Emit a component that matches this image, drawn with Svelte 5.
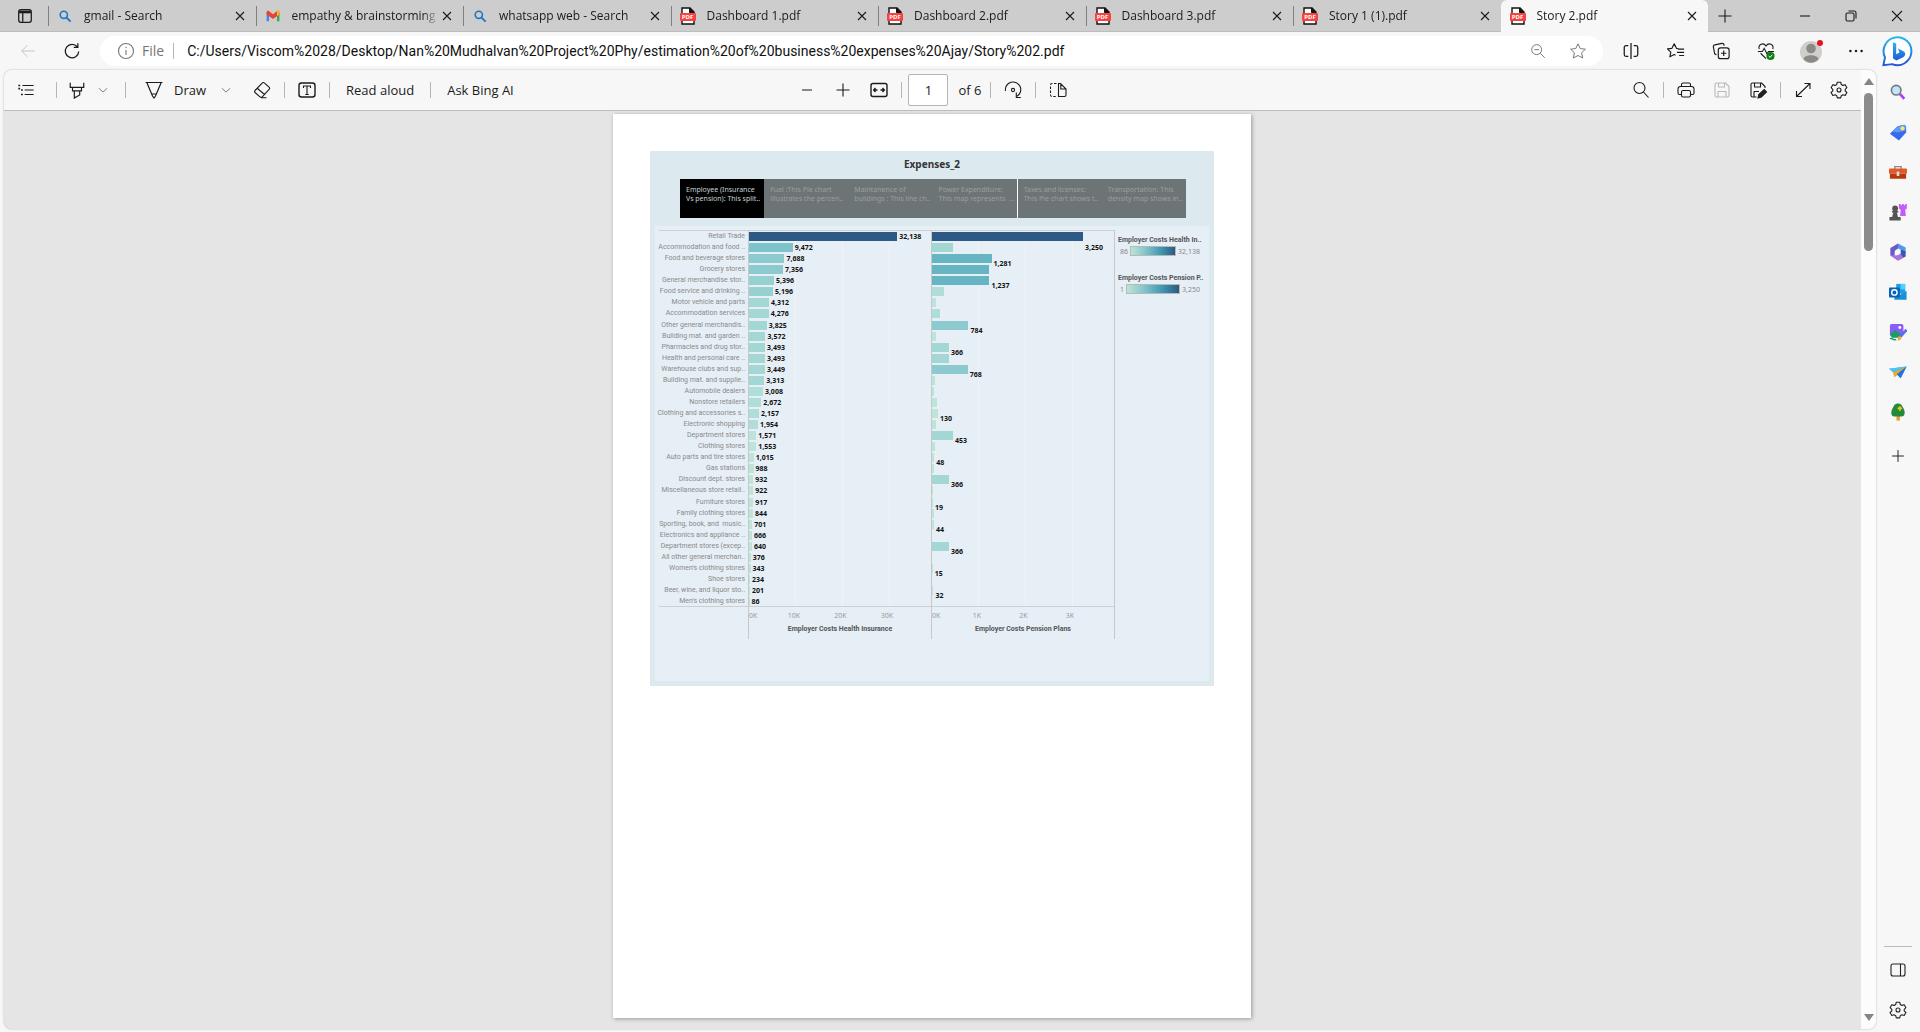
<script>
  const tabs = [
    { icon: 'find', title: 'gmail - Search' },
    { icon: 'gmail', title: 'empathy & brainstorming n' },
    { icon: 'find', title: 'whatsapp web - Search' },
    { icon: 'pdf', title: 'Dashboard 1.pdf' },
    { icon: 'pdf', title: 'Dashboard 2.pdf' },
    { icon: 'pdf', title: 'Dashboard 3.pdf' },
    { icon: 'pdf', title: 'Story 1 (1).pdf' },
    { icon: 'pdf', title: 'Story 2.pdf', active: true }
  ];

  const gear = '<path d="M8.3 2.2h3.4l.6 2.3 1.6.9 2.3-.7 1.7 3-1.7 1.6v1.6l1.7 1.6-1.7 3-2.3-.7-1.6.9-.6 2.2H8.3l-.6-2.2-1.600-.9-2.300.7-1.700-3 1.700-1.600V9.300L2.100 7.700l1.700-3 2.300.7 1.600-.9z" stroke-linejoin="round"/><circle cx="10" cy="10" r="2"/>';
  const icons = {
    tabmenu: '<rect x="3" y="3" width="14" height="14" rx="2.500" stroke-width="1.400"/><path d="M3.500 5.500h13" stroke-width="3"/><path d="M7.500 6v10.500" stroke-width="1.400"/>',
    close: '<path d="M5 5l10 10M15 5L5 15" stroke-width="1.400"/>',
    winclose: '<path d="M5 5l10 10M15 5L5 15"/>',
    plus: '<path d="M10 3.500v13M3.500 10h13"/>',
    minus: '<path d="M5 10h10"/>',
    restore: '<rect x="5" y="7" width="8" height="8" rx="1.500"/><path d="M7.500 5h5.500a2 2 0 0 1 2 2v5.500"/>',
    find: '<circle cx="8.500" cy="8.500" r="4.500" stroke="#2074c6" stroke-width="2"/><path d="M12 12l5 5" stroke="#2074c6" stroke-width="2.400"/>',
    gmail: '<path d="M2 16.500V5.500l3 2v9z" fill="#4285f4" stroke="none"/><path d="M15 7.500l3-2v11h-3z" fill="#34a853" stroke="none"/><path d="M2 5.500C2 3.500 4 3 5.200 4L10 7.700 14.800 4C16 3 18 3.500 18 5.500V8l-8 5.800L2 8z" fill="#ea4335" stroke="none"/><path d="M15 4c1.300-1 3-.3 3 1.500V8l-3 2.200z" fill="#fbbc04" stroke="none"/>',
    back: '<path d="M17.500 10H3M9.500 3.500L3 10l6.500 6.500"/>',
    refresh: '<path d="M17.500 10.500A7.500 7.500 0 1 1 16 5.500M16.500 1.500v4.500H12" stroke-width="1.400"/>',
    info: '<circle cx="10" cy="10" r="7.500"/><path d="M10 9v5M10 5.800v1.400"/>',
    zoomout: '<circle cx="8.500" cy="8.500" r="5.500"/><path d="M12.500 12.500l5 5M6 8.500h5"/>',
    star: '<path d="M10 2l2.500 5.300 5.700.7-4.200 4 1.200 5.800L10 15l-5.200 2.800L6 12 1.800 8l5.700-.7z" stroke-linejoin="round"/>',
    split: '<path d="M10 1v18" stroke-width="1.400"/><path d="M7 4H4.500a2 2 0 0 0-2 2v8a2 2 0 0 0 2 2H7M13 4h2.500a2 2 0 0 1 2 2v8a2 2 0 0 1-2 2H13" stroke-width="1.400"/>',
    favs: '<path d="M12.500 7.200l-2-.2L8 2 5.500 7l-5 .7 3.700 3.500-1 5.300L8 14l1.500.8M12 8h7M11 11.500h8M13.500 15h5.500" stroke-linejoin="round" stroke-width="1.300"/>',
    collections: '<rect x="7" y="6.500" width="12" height="12" rx="2.500" stroke-width="1.300"/><path d="M13 9.500v6M10 12.500h6M5 14.200l-1-.4a2 2 0 0 1-1.300-2.200L1.500 5.500a2 2 0 0 1 1.700-2.300L11 1.500a2 2 0 0 1 2.300 1.600l.3 1" stroke-width="1.300"/>',
    health: '<path d="M2.500 8C.8 3 7-.2 10 4.500 13-.2 19.200 3 17.500 8M1 10.500h5L8 7l3 6 1.800-2.500H19M4 12.500l6 6" stroke-width="1.200"/><circle cx="15" cy="15.500" r="4.500" fill="#107c10" stroke="none"/><path d="M13 15.600l1.500 1.500 2.500-3" stroke="#fff"/>',
    dots: '<g fill="#222" stroke="none"><circle cx="3" cy="10" r="1.600"/><circle cx="10" cy="10" r="1.600"/><circle cx="17" cy="10" r="1.600"/></g>',
    contents: '<path d="M6 5h12.500M8.500 10h10M8.500 15h10" stroke-width="1.300"/><path d="M1.500 5h2M4.500 10h2M4.500 15h2M1.500 8.500h2" stroke-width="1.800"/>',
    highlighter: '<path d="M2.500 2v5h15V2M5 7v4h10V7M7 11v8l6-3.500V11" stroke-width="1.300"/>',
    chevron: '<path d="M3 7l7 6.500L17 7" stroke-width="1.400"/>',
    pen: '<path d="M1.500 2.500h17M3 3l5.500 13L10 18l1.500-2L17 3M8 14h4" stroke-width="1.200"/>',
    eraser: '<path d="M12.300 2.800l5 4.500a1.300 1.300 0 0 1 0 1.800l-6.800 7.500a2 2 0 0 1-2.800.1L3 12.500a1.400 1.400 0 0 1 0-2l7.400-7.600a1.300 1.300 0 0 1 1.900-.1zM5.500 8.500l7 6M9 17.800h5.500" stroke-linejoin="round"/>',
    textbox: '<rect x="2" y="3" width="16" height="14" rx="2.500" stroke-width="1.400"/><path d="M6.500 8V6h7v2M10 6v8.500M8.300 14.500h3.400"/>',
    fit: '<rect x="2" y="3.500" width="16" height="13" rx="2" stroke-width="1.400"/><path d="M8.500 10H5M15 10h-3.500M6.500 8L4.700 10l1.800 2M13.500 8l1.800 2-1.800 2" stroke-width="1.400"/>',
    rotate: '<path d="M2.500 11A7.700 7.700 0 1 1 14 16.300M13.300 12.500v5h4.500"/><circle cx="10" cy="10" r="1.600"/>',
    pages: '<path d="M10.500 3.500H12.500L18 9v6a1.500 1.500 0 0 1-1.500 1.500h-6zM12.800 3.500V9h5"/><path d="M8.500 3.500H4A1.500 1.500 0 0 0 2.500 5v10A1.500 1.500 0 0 0 4 16.500h4.500" stroke-dasharray="2.500 1.500"/>',
    search: '<circle cx="8.500" cy="8" r="5.500"/><path d="M12.500 12l5 5.500"/>',
    print: '<path d="M5.500 6.500V4.500a1.500 1.500 0 0 1 1.500-1.500h6a1.500 1.500 0 0 1 1.500 1.500v2M5.500 14.500H3.500a1.500 1.500 0 0 1-1.500-1.500V9a2.500 2.500 0 0 1 2.500-2.500h11A2.500 2.500 0 0 1 18 9v4a1.500 1.500 0 0 1-1.500 1.500h-2"/><rect x="5.500" y="10.500" width="9" height="6.500" rx="1.500"/>',
    save: '<path d="M4.500 3h9L17 6.500V15.500A1.500 1.500 0 0 1 15.500 17h-11A1.500 1.500 0 0 1 3 15.500v-11A1.500 1.500 0 0 1 4.500 3zM6.500 3v4h6V3M6 17v-5.500h8V17" stroke-linejoin="round"/>',
    saveas: '<path d="M8.500 17h-4A1.500 1.500 0 0 1 3 15.500v-11A1.500 1.500 0 0 1 4.500 3h9L17 6.500V8M6.500 3v4h6V3M6 17v-5.500h5" stroke-linejoin="round"/><path d="M10 18l.8-3.500 5.400-5 2.300 2.500-5.200 5z" fill="#222"/>',
    expand: '<path d="M11.500 3.500H17v5.500M17 3.500L3.500 16.500M3.500 11v5.500H9"/>',
    gear,
    panel: '<rect x="3" y="4" width="14" height="12" rx="2"/><path d="M12.500 4v12"/>',
    sSearch: '<path d="M12 12l5 5.500" stroke="#b63df0" stroke-width="3"/><circle cx="8" cy="8" r="5.300" fill="#bfe5f8" stroke="#707a80" stroke-width="1.800"/>',
    tag: '<path d="M9.500 3.500L17 2l2 1.500v7L11 19.500 1 12z" fill="#3a68ee" stroke="none"/><path d="M9.500 3.500L17 2l2 1.500-1 5-9 2-5-1z" fill="#5a9cf8" stroke="none"/><circle cx="15" cy="6" r="2.300" fill="#ffe16b" stroke="none"/>',
    tools: '<path d="M6.500 7V4h7v3" stroke="#888" stroke-width="1.500"/><rect x="0" y="6" width="20" height="6" rx="1" fill="#e35a2a" stroke="none"/><path d="M1 12h18v5.500H1z" fill="#b8380f" stroke="none"/><rect x="8.500" y="9.500" width="3" height="5" rx="1" fill="#ddd" stroke="none"/>',
    games: '<path d="M11 1h2v1.500h1.500V1h2v1.500H18V1h1.800v5L18 7.500l.7 7h-6.400l.7-7-2-1.500z" fill="#c45cf5" stroke="none"/><g fill="#555" stroke="none"><circle cx="6.800" cy="6" r="3.300"/><path d="M3.300 9h7v1.500H8.800l1.200 5h3V19.500H.500v-4h3l1.300-5H3.300z"/></g>',
    office: '<path d="M10 .5L18.500 5v6.500l-5-4L10 6z" fill="#4f9ce8" stroke="none"/><path d="M10 .5L1.500 5.500v8.500L6 16.500l.5-8L10 6z" fill="#6b5bc9" stroke="none"/><path d="M18.500 9.500V15L10 19.500 5 16l5-1.500 3-2.500V7z" fill="#3b55b5" stroke="none"/><path d="M1.500 14l8-.5L13 12l3 4-6 3.500z" fill="#a775dc" stroke="none"/>',
    outlook: '<path d="M8 1h10v11H8z" fill="#1f9ee8" stroke="none"/><path d="M13 1h5v6h-5z" fill="#54d0ff" stroke="none"/><path d="M6 8.500l6.500 4.500L19.500 8.500v10H6z" fill="#1a8ed8" stroke="none"/><rect x="0" y="5" width="12" height="11" rx="1" fill="#0364b8" stroke="none"/><circle cx="6" cy="10.500" r="3" stroke="#fff" stroke-width="1.600"/>',
    drop: '<rect x="1" y="1" width="15" height="13.500" rx="2" fill="#8b5cf6" stroke="none"/><circle cx="12" cy="5" r="1.600" fill="#fff" stroke="none"/><path d="M1 12.500l6-5 8 6.500-3 2.500H3z" fill="#1c9b6a" stroke="none"/><path d="M1 17.500c2-1.500 3 2 7 1" stroke="#1c9b6a" stroke-width="1.500"/><path d="M12.500 15.500l7-8" stroke="#5b6cf0" stroke-width="3"/><path d="M9.500 19.500l.8-4.500 2.400-.3 1.300 1.800-1.500 2.500z" fill="#f9a826" stroke="none"/>',
    plane: '<path d="M0 6.500L19.500 4l-6.500 13-4-4z" fill="#3aa6f2" stroke="none"/><path d="M19.500 4L4.500 10.500 6 16z" fill="#f6a821" stroke="none"/><path d="M19.500 4L8.500 12.500l4.500 4.500z" fill="#2273dd" stroke="none"/><path d="M0 6.500L19.500 4 4.500 10.500z" fill="#4cc3f5" stroke="none"/>',
    tree: '<path d="M8.300 13h3.800v6.500H8.300z" fill="#f09a26" stroke="none"/><path d="M10 .5c3.500 0 4.500 2.500 5.500 4.500 3 4.500 2.500 10-1.500 10H6c-4 0-4.500-5.500-1.500-10 1-2 2-4.500 5.500-4.500z" fill="#218a3c" stroke="none"/><path d="M12 3.500v5M9.500 6h5" stroke="#f5c518" stroke-width="2"/>',
    bing: '<path d="M1.500 18.800L2.500 14A8.700 8.700 0 1 1 7 18.200z" fill="#fff" stroke="url(#ring)" stroke-width="1.200"/><path d="M7.500 4.500l2 .8V12l2-1-.9-2.500 3.500 1.700c1.500 1 1.400 2.800-.2 3.700L9.500 16l-2-1.500z" fill="url(#ring)" stroke="none"/><defs><linearGradient id="ring" x1="0" y1="0" x2="0" y2="1"><stop offset="0" stop-color="#25b9ee"/><stop offset="1" stop-color="#2457d6"/></linearGradient></defs>'
  };

  const sidebar = [
    ['sSearch', 'Search'], ['tag', 'Shopping'], ['tools', 'Tools'], ['games', 'Games'],
    ['office', 'Microsoft 365'], ['outlook', 'Outlook'], ['drop', 'Image Creator'],
    ['plane', 'Drop'], ['tree', 'Tree'], ['plus', 'Customize']
  ];

  const points = [
    ['Employee (Insurance', 'Vs pension): This split..'],
    ['Fuel :This Pie chart', 'illustrates the percen..'],
    ['Maintanence of', 'buildings : This line ch..'],
    ['Power Expenditure:', 'This map represents  ...'],
    ['Taxes and licenses:', 'This Pie chart shows t..'],
    ['Transportation: This', 'density map shows in..']
  ];

  // name, health insurance, pension plans, where the pension label sits
  const rows = [
    ['Retail Trade', 32138, 3250, 'far'],
    ['Accommodation and food ..', 9472, 453],
    ['Food and beverage stores', 7688, 1281, 'near'],
    ['Grocery stores', 7356, 1237],
    ['General merchandise stor..', 5396, 1237, 'near'],
    ['Food service and drinking ..', 5196, 257],
    ['Motor vehicle and parts', 4312, 86],
    ['Accommodation services', 4276, 171],
    ['Other general merchandis..', 3825, 784, 'near'],
    ['Building mat. and garden ..', 3572, 86],
    ['Pharmacies and drug stor..', 3493, 366, 'near'],
    ['Health and personal care ..', 3493, 366],
    ['Warehouse clubs and sup..', 3449, 768, 'near'],
    ['Building mat. and supplie..', 3313, 64],
    ['Automobile dealers', 3008, 43],
    ['Nonstore retailers', 2672, 107],
    ['Clothing and accessories s..', 2157, 130, 'near'],
    ['Electronic shopping', 1954, 86],
    ['Department stores', 1571, 453, 'near'],
    ['Clothing stores', 1553, 64],
    ['Auto parts and tire stores', 1015, 48, 'near'],
    ['Gas stations', 988, 43],
    ['Discount dept. stores', 932, 366, 'near'],
    ['Miscellaneous store retail..', 922, 21],
    ['Furniture stores', 917, 19, 'near'],
    ['Family clothing stores', 844, 43],
    ['Sporting, book, and  music..', 701, 44, 'near'],
    ['Electronics and appliance ..', 666, 0],
    ['Department stores (excep..', 640, 366, 'near'],
    ['All other general merchan..', 376, 0],
    ["Women's clothing stores", 343, 15, 'near'],
    ['Shoe stores', 234, 0],
    ['Beer, wine, and liquor sto..', 201, 32, 'near'],
    ["Men's clothing stores", 86, 0]
  ];

  const fmt = (n) => n.toLocaleString('en-US');
  const shade = (share) =>
    share > 0.8 ? '#2c5985' : share > 0.35 ? '#67b4c2' : share > 0.28 ? '#7ec2cc' :
    share > 0.2 ? '#8ccad0' : share > 0.15 ? '#97d0d0' : share > 0.1 ? '#a3d7d3' :
    share > 0.05 ? '#afddd7' : '#bce4d9';
</script>

{#snippet icon(name, size = 20)}
  <svg width={size} height={size} viewBox="0 0 20 20" fill="none" stroke="currentColor" stroke-width="1.1" aria-hidden="true">{@html icons[name]}</svg>
{/snippet}

{#snippet tool(name, label)}
  <button class="tool" aria-label={label}>{@render icon(name)}</button>
{/snippet}

<div class="browser">
  <header class="tabstrip">
    <button class="tabmenu" aria-label="Tab actions">{@render icon('tabmenu', 18)}</button>
    <div class="tabs">
      {#each tabs as tab}
        <div class="tab" class:active={tab.active}>
          {#if tab.icon === 'pdf'}
            <span class="pdf"><svg width="16" height="18" viewBox="0 0 16 18" aria-hidden="true"><path d="M2 1h8l4 4v12H2z" fill="#fff" stroke="#111" stroke-width="1.4"/><path d="M9.500 1v4.500H14" fill="#111" stroke="#111"/></svg><b>PDF</b></span>
          {:else}
            {@render icon(tab.icon, 16)}
          {/if}
          <span class="title">{tab.title}</span>
          <button class="x" aria-label="Close tab">{@render icon('close', 16)}</button>
        </div>
      {/each}
    </div>
    <button class="newtab" aria-label="New tab">{@render icon('plus')}</button>
    <div class="window">
      <button aria-label="Minimize">{@render icon('minus')}</button>
      <button aria-label="Restore">{@render icon('restore')}</button>
      <button aria-label="Close">{@render icon('winclose')}</button>
    </div>
  </header>

  <nav class="navbar">
    <button class="nav muted" aria-label="Back">{@render icon('back', 18)}</button>
    <button class="nav" aria-label="Refresh">{@render icon('refresh', 18)}</button>
    <div class="address">
      {@render icon('info', 20)}
      <label for="url">File</label>
      <i class="sep"></i>
      <input id="url" value="C:/Users/Viscom%2028/Desktop/Nan%20Mudhalvan%20Project%20Phy/estimation%20of%20business%20expenses%20Ajay/Story%202.pdf" />
      <button aria-label="Zoom out">{@render icon('zoomout', 18)}</button>
      <button aria-label="Add to favorites">{@render icon('star', 18)}</button>
    </div>
    <div class="actions">
      <button aria-label="Split screen">{@render icon('split', 18)}</button>
      <button aria-label="Favorites">{@render icon('favs', 18)}</button>
      <button aria-label="Collections">{@render icon('collections', 18)}</button>
      <button aria-label="Browser essentials">{@render icon('health', 18)}</button>
      <button aria-label="Profile"><svg width="24" height="24" viewBox="0 0 24 24" aria-hidden="true"><circle cx="12" cy="13" r="11" fill="#d0cecb"/><circle cx="12" cy="9.500" r="4.800" fill="#8b8886"/><path d="M4.500 20c1-5 14-5 15 0-4 5-11 5-15 0z" fill="#8b8886"/><circle cx="21" cy="4" r="3" fill="#e81123"/></svg></button>
      <button aria-label="Settings and more">{@render icon('dots', 16)}</button>
    </div>
    <button class="bing" aria-label="Discover">{@render icon('bing', 32)}</button>
  </nav>

  <div class="body">
    <main class="viewer">
      <div class="content">
        <div class="toolbar">
          <div class="group">
            <button class="tool first" aria-label="Contents">{@render icon('contents', 18)}</button>
            <i class="sep wide"></i>
            <button class="hl" aria-label="Highlight">{@render icon('highlighter', 18)}</button>
            <button class="chev" aria-label="Highlight options">{@render icon('chevron', 12)}</button>
            <i class="sep wide"></i>
            <button class="draw">{@render icon('pen')}Draw</button>
            <button class="chev" aria-label="Draw options">{@render icon('chevron', 12)}</button>
            <button class="tool erase" aria-label="Erase">{@render icon('eraser')}</button>
            <i class="sep"></i>
            {@render tool('textbox', 'Add text')}
            <i class="sep"></i>
            <button class="word">Read aloud</button>
            <i class="sep"></i>
            <button class="word">Ask Bing AI</button>
          </div>
          <div class="group mid">
            {@render tool('minus', 'Zoom out')}
            {@render tool('plus', 'Zoom in')}
            {@render tool('fit', 'Fit to width')}
            <i class="sep"></i>
            <input id="pageno" aria-label="Page number" value="1" />
            <label for="pageno">of 6</label>
            <i class="sep"></i>
            {@render tool('rotate', 'Rotate')}
            <i class="sep"></i>
            {@render tool('pages', 'Page view')}
          </div>
          <div class="group end">
            {@render tool('search', 'Find')}
            <i class="sep"></i>
            {@render tool('print', 'Print')}
            <button class="tool off" aria-label="Save">{@render icon('save')}</button>
            {@render tool('saveas', 'Save as')}
            <i class="sep"></i>
            {@render tool('expand', 'Full screen')}
            {@render tool('gear', 'Settings')}
          </div>
        </div>

        <div class="canvas">
          <article class="page">
            <section class="story">
              <h1>Expenses_2</h1>
              <div class="points">
                {#each points as p, i}
                  <button class="point" class:on={i === 0} class:gap={i === 4}><span>{p[0]}</span><span>{p[1]}</span></button>
                {/each}
              </div>
              <div class="sheet">
                <div class="chart">
                  <div class="names">
                    {#each rows as r}<div class="row">{r[0]}</div>{/each}
                  </div>
                  <div class="pane health">
                    {#each rows as r}
                      <div class="row"><i class="bar" style="width:{(r[1] / 32138) * 81.5}%; background:{shade(r[1] / 32138)}"></i><b>{fmt(r[1])}</b></div>
                    {/each}
                  </div>
                  <div class="pane pension">
                    {#each rows as r}
                      <div class="row"><i class="bar" style="width:{(r[2] / 3250) * 83}%; background:{shade(r[2] / 3250)}"></i>{#if r[3]}<b class={r[3]}>{fmt(r[2])}</b>{/if}</div>
                    {/each}
                  </div>
                  <div class="corner"></div>
                  <div class="axis">
                    <div class="ticks"><span>0K</span><span>10K</span><span>20K</span><span>30K</span></div>
                    <strong>Employer Costs Health Insurance</strong>
                  </div>
                  <div class="axis last">
                    <div class="ticks"><span>0K</span><span>1K</span><span>2K</span><span>3K</span></div>
                    <strong>Employer Costs Pension Plans</strong>
                  </div>
                </div>
                <aside class="legends">
                  <div class="legend">
                    <strong>Employer Costs Health In..</strong>
                    <div><span>86</span><i></i><span>32,138</span></div>
                  </div>
                  <div class="legend">
                    <strong>Employer Costs Pension P..</strong>
                    <div><span>1</span><i></i><span>3,250</span></div>
                  </div>
                </aside>
              </div>
            </section>
          </article>
        </div>
      </div>
      <div class="scroll">
        <svg width="10" height="8" viewBox="0 0 10 8" aria-hidden="true"><path d="M5 0l5 7H0z" fill="#858585"/></svg>
        <i class="thumb"></i>
        <svg width="10" height="8" viewBox="0 0 10 8" aria-hidden="true"><path d="M5 8l5-7H0z" fill="#858585"/></svg>
      </div>
    </main>

    <aside class="sidebar">
      {#each sidebar as [name, label]}
        <button class:add={name === 'plus'} aria-label={label}>{@render icon(name, 18)}</button>
      {/each}
      <hr />
      <button aria-label="Toggle sidebar">{@render icon('panel')}</button>
      <button aria-label="Sidebar settings">{@render icon('gear')}</button>
    </aside>
  </div>
</div>

<style>
  :global(body) { margin: 0; }
  .browser, .browser :global(*) { box-sizing: border-box; }
  .browser {
    height: 100vh; display: flex; flex-direction: column; background: #f7f7f7; color: #1b1b1b;
    font: 14px/20px "Open Sans", "Noto Sans", sans-serif; overflow: hidden;
  }
  button { border: 0; background: none; padding: 0; margin: 0; color: inherit; font: inherit; display: flex; align-items: center; justify-content: center; }
  svg { flex: none; display: block; }
  input { font: inherit; color: inherit; border: 0; outline: 0; background: none; padding: 0; min-width: 0; }
  .sep { flex: none; width: 1px; height: 16px; background: #b5b5b5; }

  .tabstrip { height: 32px; flex: none; display: flex; background: #cdcdcd; font-size: 12px; border-bottom: 1px solid #bdbdbd; }
  .tabmenu { width: 48px; padding-left: 1px; }
  .tabs { flex: 0 1 1660px; display: flex; min-width: 0; }
  .tab { flex: 1 1 0; min-width: 0; display: flex; align-items: center; padding: 0 8px 0 9px; position: relative; }
  .tab:not(.active)::before { content: ""; position: absolute; left: 0; top: 6px; width: 1px; height: 20px; background: #808080; }
  .tab.active { background: #f7f7f7; border-radius: 6px 6px 0 0; margin-bottom: -1px; }
  .title { flex: 1; min-width: 0; margin-left: 11px; white-space: nowrap; overflow: hidden; mask-image: linear-gradient(to left, transparent, #000 16px); }
  .x { width: 16px; height: 24px; }
  .pdf { position: relative; display: block; width: 16px; height: 18px; }
  .pdf b { position: absolute; left: 0; top: 6px; width: 16px; height: 8px; border-radius: 1px; background: #f9423f; color: #fff; font: bold 6px/8px "Open Sans", sans-serif; text-align: center; }
  .newtab { width: 34px; }
  .window { margin-left: auto; display: flex; }
  .window button { width: 46px; }

  .navbar { height: 38px; flex: none; display: flex; align-items: center; padding: 0 4px 0 6px; }
  .nav { width: 44px; height: 30px; }
  .muted { color: #c4c4c4; }
  .address { flex: 1; min-width: 0; height: 30px; margin: 0 5px 0 6px; border-radius: 15px; background: #fff; display: flex; align-items: center; padding: 0 5px 0 16px; color: #767676; }
  .address label { margin: 0 9px 0 6px; }
  .address input { flex: 1; margin-left: 13px; color: #111; font-family: Roboto, sans-serif; }
  .address button { width: 40px; height: 30px; }
  .actions { display: flex; }
  .actions button { width: 45px; height: 32px; }
  .bing { width: 38px; height: 34px; }

  .body { flex: 1; min-height: 0; display: flex; }
  .viewer { flex: 1; min-width: 0; margin: 0 0 3px 4px; display: flex; border-radius: 8px; overflow: hidden; background: #e5e5e5; box-shadow: 0 0 2px #aaa; }
  .content { flex: 1; min-width: 0; display: flex; flex-direction: column; }
  .toolbar { height: 41px; flex: none; background: #f7f7f7; border-bottom: 1px solid #bdbdbd; display: grid; grid-template-columns: 1fr auto 1fr; font-size: 13px; }
  .group { display: flex; align-items: center; }
  .end { justify-content: flex-end; padding-right: 4px; }
  .tool { width: 36px; height: 32px; }
  .first { width: 44px; }
  .erase { margin-left: 4px; }
  .group .sep { margin: 0 4px; }
  .group .wide { margin: 0 8px; }
  .hl { width: 24px; }
  .chev { width: 28px; height: 32px; color: #666; }
  .draw { padding-left: 10px; gap: 10px; margin-right: 6px; }
  .word { padding: 0 12px; }
  .off { color: #b9b9b9; }
  .mid input { width: 40px; height: 32px; margin-left: 2px; border: 1px solid #b5b5b5; border-radius: 2px; background: #fff; text-align: center; }
  .mid label { padding: 0 4px 0 10px; }

  .canvas { flex: 1; min-height: 0; padding: 3px 1px 11px 0; display: flex; justify-content: center; }
  .page { width: 638px; background: #fff; box-shadow: 1px 1px 4px #999; padding: 37px 37px 0; }
  .story { background: #dce9ef; padding: 0 5px 5px; color: #666; font: 7px/9px "Noto Sans", sans-serif; }
  h1 { margin: 0; padding: 5px 0 7px; font: bold 10px/16px "Noto Sans", sans-serif; color: #333; text-align: center; }
  .points { margin: 0 23px 8px 25px; display: flex; background: #6d7475; }
  .point { flex: 1 1 0; min-width: 0; height: 39px; padding: 6px 0 0 6px; flex-direction: column; align-items: flex-start; justify-content: flex-start; color: #9a9f9f; white-space: pre; }
  .point.on { background: #000; color: #c4d4d8; }
  .point.gap { border-left: 1px solid #fff; }
  .sheet { background: #e6eff6; display: flex; padding: 4px 0 42px 4px; }
  .chart { flex: none; display: grid; grid-template-columns: 89px 183px 184px; }
  .names { padding-right: 3px; color: #8a8a8a; font-family: Roboto, sans-serif; }
  .names .row { justify-content: flex-end; white-space: pre; }
  .row { height: 11px; display: flex; align-items: center; }
  .row:nth-child(8), .row:nth-child(24) { margin-bottom: 1px; }
  .row:last-child { height: 10px; }
  .names, .pane { border-top: 1px solid #cfcfcf; border-bottom: 1px solid #cfcfcf; }
  .pane { border-left: 1px solid #c8c8c8; background: repeating-linear-gradient(to right, transparent 0 46px, #f0f2f3 46px 47px); }
  .pension, .last { border-right: 1px solid #c8c8c8; }
  .bar { flex: none; height: 9px; }
  .row b { padding-left: 2px; color: #111; line-height: 11px; }
  .row .near { padding-top: 10px; }
  .row .far { padding-top: 22px; }
  .axis { border-left: 1px solid #c8c8c8; height: 32px; padding-top: 4px; text-align: center; }
  .ticks { display: grid; grid-template-columns: 22px 46px 47px 46px; color: #999; margin-bottom: 5px; }
  .ticks span:first-child { text-align: left; }
  strong { display: block; color: #555; font-family: Roboto, sans-serif; }
  .legends { padding: 6px 0 0 3px; }
  .legend { width: 84px; margin-bottom: 18px; white-space: nowrap; }
  .legend div { display: flex; align-items: center; gap: 2px; padding: 0 2px; margin-top: 1px; color: #888; }
  .legend i { flex: 1; height: 10px; border: 1px solid #b9b9ae; background: linear-gradient(to right, #bce4d8, #81c4cc, #3f9ab5, #2c5985); }

  .scroll { width: 15px; flex: none; background: #fcfcfc; display: flex; flex-direction: column; align-items: center; padding: 8px 0; }
  .thumb { width: 9px; height: 158px; border-radius: 5px; background: #8b8b8b; margin: 7px 0 auto; }

  .sidebar { width: 44px; flex: none; display: flex; flex-direction: column; align-items: center; color: #222; padding: 2px 0; }
  .sidebar button { width: 40px; height: 40px; flex: none; }
  .sidebar .add { margin-top: 4px; }
  .sidebar hr { width: 28px; margin: auto 0 3px; border: 0; border-top: 1px solid #bbb; }
</style>
